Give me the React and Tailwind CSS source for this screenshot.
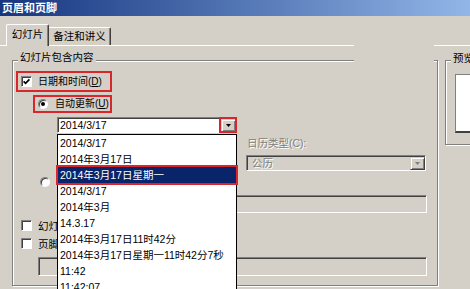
import React from 'react';

const listItems = [
  '2014/3/17',
  '2014年3月17日',
  '2014年3月17日星期一',
  '2014/3/17',
  '2014年3月',
  '14.3.17',
  '2014年3月17日11时42分',
  '2014年3月17日星期一11时42分7秒',
  '11:42',
  '11:42:07',
];

function Checkbox({ checked }) {
  return (
    <span className="flex h-[11px] w-[11px] shrink-0 items-center justify-center border border-t-[#808080] border-l-[#808080] border-r-white border-b-white bg-white shadow-[inset_1px_1px_0_#404040]">
      {checked && (
        <svg width="7" height="7" viewBox="0 0 7 7">
          <path d="M0.6 3.4 L2.6 5.4 L6.4 1.4" stroke="#000" strokeWidth="1.7" fill="none" />
        </svg>
      )}
    </span>
  );
}

function Radio({ checked }) {
  return (
    <span className="flex h-[10px] w-[10px] shrink-0 items-center justify-center rounded-full border border-t-[#808080] border-l-[#808080] border-r-white border-b-white bg-white shadow-[inset_1px_1px_0_#404040]">
      {checked && <span className="h-[4px] w-[4px] rounded-full bg-black" />}
    </span>
  );
}

function DropBtn({ disabled }) {
  return (
    <span className="flex h-full w-[15px] items-center justify-center border border-t-[#d4d0c8] border-l-[#d4d0c8] border-r-[#404040] border-b-[#404040] bg-[#d4d0c8] shadow-[inset_1px_1px_0_#fff,inset_-1px_-1px_0_#808080]">
      <svg width="5" height="3" viewBox="0 0 5 3">
        <path d="M0 0h5L2.5 3z" fill={disabled ? '#808080' : '#000'} />
      </svg>
    </span>
  );
}

function Combo({ value, disabled, red }) {
  return (
    <div className="relative flex h-[16px] w-[180px] shrink-0 border border-t-[#808080] border-l-[#808080] border-r-white border-b-white">
      <div
        className={
          disabled
            ? 'flex flex-1 bg-[#d4d0c8] pl-[1px] pt-[1px] shadow-[inset_1px_1px_0_#404040]'
            : 'flex flex-1 bg-white pl-[1px] pt-[1px] shadow-[inset_1px_1px_0_#404040]'
        }
      >
        <span
          className={
            disabled
              ? 'flex-1 whitespace-nowrap pl-[4px] leading-[13px] text-[#808080] [text-shadow:1px_1px_0_#fff]'
              : 'flex-1 whitespace-nowrap pl-[1px] leading-[13px]'
          }
        >
          {value}
        </span>
        <DropBtn disabled={disabled} />
      </div>
      {red && <span className="absolute -right-[1px] -top-[1px] h-[16px] w-[18px] border-2 border-[#d9262c]" />}
    </div>
  );
}

function Field({ className }) {
  return (
    <div className={`border border-t-[#808080] border-l-[#808080] border-r-white border-b-white ${className}`}>
      <div className="h-full w-full bg-[#d4d0c8] shadow-[inset_1px_1px_0_#404040]" />
    </div>
  );
}

export default function App() {
  return (
    <div className="relative h-[289px] w-[470px] overflow-hidden bg-[#d4d0c8] font-['Liberation_Sans','Noto_Sans_CJK_SC',sans-serif] text-[10.5px] text-black">
      {/* title bar */}
      <div className="flex h-[16px] items-center bg-linear-to-r from-[#17357f] to-[#93b6e8] pl-[2px] text-[11px] font-bold text-white">
        页眉和页脚
      </div>

      {/* tabs */}
      <div className="flex h-[29px] items-end pl-[6px]">
        <div className="relative z-10 -mb-[1px] flex h-[22px] w-[43px] items-center justify-center rounded-t-[2px] border-l border-t border-r border-l-white border-t-white border-r-[#404040] bg-[#d4d0c8] pb-[2px] shadow-[inset_-1px_0_0_#808080]">
          幻灯片
        </div>
        <div className="flex h-[18px] w-[62px] items-center justify-center rounded-tr-[2px] border-t border-r border-t-white border-r-[#404040] shadow-[inset_-1px_0_0_#808080]">
          备注和讲义
        </div>
      </div>

      {/* tab page */}
      <div className="flex border-t border-white">
        <div className="relative ml-[12px] mt-[14px] h-[226px] w-[426px] shrink-0 border border-[#808080] shadow-[inset_1px_1px_0_#fff,1px_1px_0_#fff]">
          <span className="absolute -top-[11px] left-[5px] whitespace-nowrap bg-[#d4d0c8] px-[2px] leading-[14px]">
            幻灯片包含内容
          </span>

          <div className="flex flex-col">
            <div className="ml-[3px] mt-[10px] flex h-[21px] w-[96px] items-center gap-[6px] whitespace-nowrap border-2 border-[#d9262c] pl-[3px]">
              <Checkbox checked />
              <span className="text-[10px] leading-[12px]">
                日期和时间(<span className="underline">D</span>)
              </span>
            </div>

            <div className="ml-[20px] mt-[3px] flex h-[18px] w-[79px] items-center gap-[7px] whitespace-nowrap border-2 border-[#d9262c] pl-[3px]">
              <Radio checked />
              <span className="text-[10px] leading-[12px]">
                自动更新(<span className="underline">U</span>)
              </span>
            </div>

            <div className="ml-[44px] mt-[4px] flex items-start">
              <Combo value="2014/3/17" red />
              <div className="ml-[9px] flex flex-col">
                <span className="mt-[20px] h-[12px] whitespace-nowrap pl-[1px] leading-[12px] text-[#808080] [text-shadow:1px_1px_0_#fff]">
                  日历类型(C):
                </span>
                <div className="mt-[6px]">
                  <Combo value="公历" disabled />
                </div>
              </div>
            </div>

            <div className="ml-[27px] mt-[6px] flex h-[10px] items-center gap-[7px] whitespace-nowrap">
              <Radio />
              <span className="leading-[12px]">固定(X)</span>
            </div>

            <Field className="ml-[44px] mt-[8px] h-[18px] w-[370px]" />

            <div className="ml-[8px] mt-[7px] flex h-[11px] items-center gap-[6px] whitespace-nowrap">
              <Checkbox />
              <span className="leading-[12px]">幻灯片编号(N)</span>
            </div>

            <div className="ml-[8px] mt-[7px] flex h-[11px] items-center gap-[6px] whitespace-nowrap">
              <Checkbox />
              <span className="leading-[12px]">页脚(F)</span>
            </div>

            <Field className="ml-[25px] mt-[8px] h-[19px] w-[389px]" />
          </div>
        </div>

        {/* preview */}
        <div className="relative ml-[7px] mt-[14px] h-[85px] w-[40px] shrink-0 border border-[#808080] shadow-[inset_1px_1px_0_#fff,1px_1px_0_#fff]">
          <span className="absolute -top-[10px] left-[5px] whitespace-nowrap bg-[#d4d0c8] px-[2px] leading-[14px]">预览</span>
          <div className="ml-[9px] mt-[13px] h-[59px] w-[30px] border-l border-t border-b-2 border-l-[#808080] border-t-[#808080] border-b-[#404040] bg-white" />
        </div>
      </div>

      {/* erased strip */}
      <div className="absolute left-[354px] top-[44px] h-[19px] w-[80px] bg-[#d4d0c8]" />

      {/* open dropdown list */}
      <div className="absolute left-[57px] top-[134px] flex h-[170px] w-[180px] flex-col border border-black bg-white">
        {listItems.map((t, i) =>
          i === 2 ? (
            <div
              key={i}
              className="relative z-10 h-[16px] shrink-0 whitespace-nowrap bg-[#0a246a] pl-[2px] leading-[16px] text-white ring-2 ring-[#d9262c]"
            >
              {t}
            </div>
          ) : (
            <div key={i} className="h-[16px] shrink-0 whitespace-nowrap pl-[2px] leading-[16px]">
              {t}
            </div>
          )
        )}
      </div>
    </div>
  );
}
